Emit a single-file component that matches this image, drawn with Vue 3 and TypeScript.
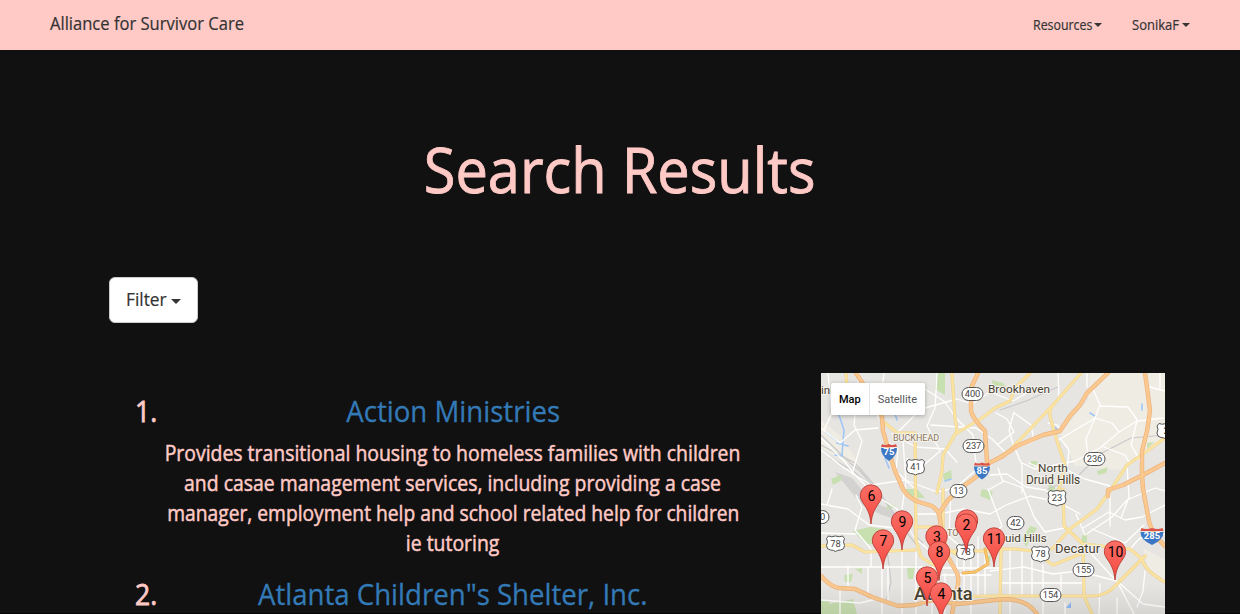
<script setup lang="ts">
interface Result { name: string; width: string; lines: string[] }
interface Pin { label: string; x: number; y: number }
interface Label { text: string; x: number; y: number; size: number; color?: string; weight?: number }
interface Shield { text: string; x: number; y: number; kind: 'oval' | 'us' | 'interstate' }

const menus: string[] = ['Resources', 'SonikaF']

const results: Result[] = [
  {
    name: 'Action Ministries',
    width: 'first',
    lines: [
      'Provides transitional housing to homeless families with children',
      'and casae management services, including providing a case',
      'manager, employment help and school related help for children',
      'ie tutoring',
    ],
  },
  { name: 'Atlanta Children"s Shelter, Inc.', width: 'second', lines: [] },
]

const highways: string[] = [
  'M856 373L865 387L877 405L882 417L883 431L890 455L895 471L903 489Q908 498 919 502L932 506Q940 511 940 520L942 532L948 557L957 573Q960 582 956 592L952 614',
  'M978 373L971 388V411Q973 419 985 431L987 462',
  'M1108 373L1087 393L1080 405L1070 416L1060 431L1043 435L1017 446L1003 456L987 464L976 477L965 485L948 500L940 512',
  'M1145 373L1148 395L1150 411L1147 431L1142 451V475L1143 489L1148 516Q1150 533 1165 546',
  'M1165 463L1143 475L1123 485L1108 490V496',
  'M821 576Q831 587 839 588L855 589L872 597L898 606L915 605L932 600L958 604L995 600Q1025 596 1037 614',
]
const mainRoads: string[] = [
  'M846 373L847 388',
  'M952 373L955 418L957 431L943 455L942 471L937 493',
  'M957 433L982 418L995 408L1010 401L1015 388L1030 373',
  'M885 423L897 433H915L916 540L921 557L935 566',
  'M1081 373L1053 405Q1048 411 1051 420L1057 441L1065 465L1058 493',
  'M1053 405L1010 450L990 463',
  'M1165 438L1140 456L1127 465L1110 491L1097 509L1070 529L1052 549',
  'M1063 489L1064 526L1083 544L1130 549L1142 559Q1145 571 1165 582',
  'M1145 556L1117 584Q1107 596 1092 596H990L945 597',
  'M945 551L995 551L1001 549L1015 549L1033 551L1053 565L1083 553',
  'M1083 544L1084 596L1092 614',
  'M1001 549L1000 614',
  'M821 546L852 545L865 552L915 550',
  'M915 527H943M943 489V540M932 540L960 556',
]
const ramp = 'M963 573L975 572L988 564L985 549'
const streets: string[] = [
  'M821 438L845 462L855 475L875 495L897 509L915 538L930 551',
  'M821 450L844 468L871 485L905 480L937 492L955 488L975 471',
  'M821 428L840 443L855 430L878 428M828 373L832 413L824 430M859 373L854 425L862 441L852 474M884 373L878 418M915 415L898 432',
  'M925 389L945 402L955 417L973 435L976 464M937 373L935 408L927 426L940 451L925 464L907 459',
  'M925 408L957 399L972 404L990 392L1013 401L1030 391M931 425L976 428L992 439L1008 455',
  'M892 434L916 447L945 449L957 462M885 440L898 449L896 471L914 488M903 441L906 481L902 509',
  'M856 495L862 507L855 530L871 549V566M821 504L848 509L869 525L895 528M821 567H857L868 567H916L970 568',
  'M902 515V614M902 566V614M882 543V614M916 552V614M840 591V614M821 600L860 603L880 598',
  'M917 514H939L964 509L990 514L1006 505L1030 496L1058 502L1080 514M951 489L949 537L971 555V614',
  'M937 568L1000 568M942 575H991M957 555V592M964 556V592M978 537V597M985 555V595',
  'M988 489L1002 526L990 538M1023 489L1034 517L1045 532L1064 528M1010 549V596M1022 550V596M1032 551V597',
  'M990 571L1024 567L1053 574L1078 571L1117 581L1143 604L1165 607M1000 583H1082M1010 596V614M1043 565V614M1061 575V596',
  'M1087 549L1107 571L1118 583L1134 614M1083 528L1109 512L1125 520L1142 517L1165 505M1110 526V489',
  'M1092 529L1125 543L1144 525M1076 514L1085 535L1112 517L1127 500L1155 488L1165 491',
  'M1092 387L1100 405L1095 418L1057 441M1100 406L1128 407L1138 421L1163 418M1095 418L1086 439L1088 457',
  'M1095 418L1112 423L1119 432L1100 448L1075 461L1035 469L1022 463M1119 432L1137 421L1131 445L1140 460',
  'M1127 465L1129 497L1121 518M1104 447L1125 455L1130 464M1150 387L1165 391M1160 373V388',
  'M1014 412L1009 430L1013 444L1022 465V493M996 413L1007 419L1014 432L997 445M1014 413L1031 425L1034 441L1019 447',
  'M1058 373L1059 399M1087 373V387M1048 423L1057 425L1061 430M1060 438L1069 450L1067 470L1085 479L1110 486',
  'M990 489L1004 481L1023 488M998 468L1003 482M990 475L1007 474L1026 487L1045 490L1056 497M1029 463L1045 470',
  'M1100 584L1099 614M1145 571L1143 591L1137 607M1130 549L1140 538L1165 534M1117 598V614M1065 603V614',
  'M832 489L827 505M848 566V590M868 567V596M888 566V603M932 567V614M945 574V614M821 533L856 534',
]
const rails: string[] = [
  'M821 435L846 459L861 472L888 505L900 522L923 543',
  'M821 445L855 463L877 488L902 527L916 544',
  'M830 458L852 470L867 483M1000 410L1026 401L1058 387M1048 489L1078 476L1100 454L1131 438L1165 435M887 550L891 582L886 602',
]
const parks: string[] = [
  'M937 373H945V395L935 389Z', 'M831 479L840 475L842 480L833 485Z', 'M943 474L951 470L952 478L944 481Z',
  'M853 531L870 527L885 529L882 545L866 544Z', 'M821 600L831 600L829 604L853 599L857 614H821Z',
  'M844 575L853 574L851 582H845Z', 'M901 489L917 489L925 498H911Z', 'M907 568L915 565L913 579H908Z',
  'M982 489L993 492L990 500L980 496Z', 'M992 380L1003 383L1008 389L993 387Z',
  'M1031 461H1038L1036 466H1031Z', 'M1049 484L1055 487V493H1048Z', 'M1097 471L1108 467L1106 473L1098 475Z',
  'M1030 526L1037 528L1026 547L1022 539Z', 'M1082 536L1087 532V547L1081 545Z', 'M1147 443L1154 442L1147 449Z',
  'M855 569L862 568V574Z', 'M983 558L991 555L990 562Z', 'M887 503L896 506L887 511Z',
]
const water: string[] = [
  'M841 388L838 412L844 430L842 455M837 443L848 446M826 432L837 441',
  'M1090 413L1095 416M1142 404V410M1054 427L1058 430',
  'M885 458L889 468M945 481L951 479M894 411L897 420M835 455L842 456',
]

const labels: Label[] = [
  { text: 'in', x: 821, y: 394, size: 11.5 },
  { text: 'Brookhaven', x: 988, y: 393, size: 11.8 },
  { text: 'BUCKHEAD', x: 893, y: 441, size: 9, color: '#8c7558' },
  { text: 'North', x: 1038, y: 472, size: 11.8 },
  { text: 'Druid Hills', x: 1026, y: 484, size: 11.9 },
  { text: 'uid Hills', x: 1005, y: 542, size: 11.7 },
  { text: 'Decatur', x: 1055, y: 552.5, size: 13 },
  { text: 'TO', x: 947, y: 536, size: 9, color: '#8c7558' },
  { text: 'Atlanta', x: 914, y: 600, size: 18.3, weight: 500 },
]
const shields: Shield[] = [
  { text: '400', x: 972.5, y: 394, kind: 'oval' },
  { text: '237', x: 973.5, y: 446, kind: 'oval' },
  { text: '236', x: 1094.5, y: 459, kind: 'oval' },
  { text: '13', x: 958.5, y: 491, kind: 'oval' },
  { text: '42', x: 1015.5, y: 523, kind: 'oval' },
  { text: '155', x: 1083.5, y: 570, kind: 'oval' },
  { text: '154', x: 1050.5, y: 595, kind: 'oval' },
  { text: '0', x: 822.5, y: 517, kind: 'oval' },
  { text: '41', x: 915.5, y: 467, kind: 'us' },
  { text: '78', x: 835.5, y: 543.5, kind: 'us' },
  { text: '78', x: 965.5, y: 552, kind: 'us' },
  { text: '23', x: 1057, y: 498, kind: 'us' },
  { text: '78', x: 1040.5, y: 554, kind: 'us' },
  { text: '2', x: 1166, y: 431, kind: 'us' },
  { text: '75', x: 889, y: 452, kind: 'interstate' },
  { text: '85', x: 982, y: 470.5, kind: 'interstate' },
  { text: '285', x: 1152, y: 536, kind: 'interstate' },
]
const pins: Pin[] = [
  { label: '6', x: 871, y: 495 },
  { label: '', x: 967, y: 520 },
  { label: '9', x: 902, y: 521 },
  { label: '2', x: 966, y: 524 },
  { label: '3', x: 936.5, y: 536 },
  { label: '11', x: 994, y: 538 },
  { label: '7', x: 883, y: 540 },
  { label: '10', x: 1115, y: 551 },
  { label: '8', x: 939, y: 551.5 },
  { label: '5', x: 927, y: 577 },
  { label: '4', x: 941, y: 593 },
]
const ovalWidth = (s: Shield): number => (s.text.length > 2 ? 21 : s.text.length === 2 ? 17 : 13)
const badgeWidth = (s: Shield): number => (s.text.length > 2 ? 23 : 16)
</script>

<template>
  <div class="page">
    <nav class="navbar">
      <a class="brand">Alliance for Survivor Care</a>
      <div class="menus">
        <a v-for="m in menus" :key="m" class="menu" :class="m.toLowerCase()"><span>{{ m }}</span><i class="caret"></i></a>
      </div>
    </nav>
    <h1 class="title"><span>Search Results</span></h1>
    <button class="filter"><span>Filter</span><i class="caret big"></i></button>
    <div class="content">
      <div class="results">
        <section v-for="(r, i) in results" :key="r.name" class="result">
          <div class="number">{{ i + 1 }}.</div>
          <div class="body">
            <h2><a :class="r.width">{{ r.name }}</a></h2>
            <p v-for="(line, n) in r.lines" :key="line" :class="'line' + n"><span>{{ line }}</span></p>
          </div>
        </section>
      </div>
      <div class="map">
        <svg width="344" height="241" viewBox="821 373 344 241">
          <defs>
            <linearGradient id="pin" x1="0" y1="0" x2="0" y2="1">
              <stop offset="0" stop-color="#fc7067" />
              <stop offset="1" stop-color="#f2473f" />
            </linearGradient>
            <linearGradient id="shade" x1="0" y1="0" x2="0" y2="1">
              <stop offset="0" stop-opacity="0" />
              <stop offset="1" stop-opacity=".07" />
            </linearGradient>
          </defs>
          <rect x="821" y="373" width="344" height="241" fill="#e7e5e2" />
          <path d="M1090 373H1165V440L1120 470L1075 466L1060 433L1088 400ZM821 420L842 437L860 466L845 462L821 448ZM1143 548L1165 560V580L1148 568Z" fill="#efece3" />
          <path d="M835 472L852 478L872 502L888 508L900 521L880 514L862 505Z" fill="#d3d2d1" />
          <path v-for="d in parks" :key="d" :d="d" fill="#c8dfb0" />
          <path d="M1066 608L1071 602V608Z" fill="#8fb9f5" />
          <g fill="none" stroke-linejoin="round" stroke-linecap="round">
            <path v-for="d in rails" :key="d" :d="d" stroke="#c9c9ca" stroke-width="1.2" />
            <path v-for="d in water" :key="d" :d="d" stroke="#a0c6f6" stroke-width="1.6" />
            <path v-for="d in streets" :key="d" :d="d" stroke="#fff" stroke-width="1.3" />
            <path v-for="d in mainRoads" :key="d" :d="d" stroke="#ecd08c" stroke-width="3.2" />
            <path v-for="d in mainRoads" :key="d" :d="d" stroke="#fbe3a1" stroke-width="2.3" />
            <path :d="ramp" stroke="#e8a64b" stroke-width="3" />
            <path :d="ramp" stroke="#fbca6d" stroke-width="1.6" />
            <path v-for="d in highways" :key="d" :d="d" stroke="#ecb27a" stroke-width="4.4" />
            <path v-for="d in highways" :key="d" :d="d" stroke="#fbc990" stroke-width="3" />
          </g>
          <rect x="821" y="584" width="344" height="30" fill="url(#shade)" />
          <text v-for="l in labels" :key="l.text" class="place" :x="l.x" :y="l.y" :font-size="l.size" :font-weight="l.weight ?? 400" :fill="l.color ?? '#48402f'">{{ l.text }}</text>
          <g v-for="(s, i) in shields" :key="i" :transform="`translate(${s.x} ${s.y})`">
            <template v-if="s.kind === 'oval'">
              <rect :x="-ovalWidth(s) / 2" y="-6.5" :width="ovalWidth(s)" height="13" rx="6.5" fill="#fff" stroke="#555" />
            </template>
            <template v-else-if="s.kind === 'us'">
              <path d="M-7-7.5Q-4-6 0-7.5Q4-6 7-7.5L9-5Q7-2 9 2Q9 6 5 6.5Q2 6.5 0 8Q-2 6.5-5 6.5Q-9 6-9 2Q-7-2-9-5Z" fill="#fff" stroke="#555" />
            </template>
            <template v-else>
              <path :d="`M${-badgeWidth(s) / 2} -4H${badgeWidth(s) / 2}Q${badgeWidth(s) / 2} 4 0 9Q${-badgeWidth(s) / 2} 4 ${-badgeWidth(s) / 2} -4Z`" fill="#3b77c4" />
              <path :d="`M${-badgeWidth(s) / 2 + 1} -8Q${-badgeWidth(s) / 4} -6 0 -8Q${badgeWidth(s) / 4} -6 ${badgeWidth(s) / 2 - 1} -8L${badgeWidth(s) / 2} -5H${-badgeWidth(s) / 2}Z`" fill="#d9534a" />
            </template>
            <text class="route" :class="s.kind" y="3.3">{{ s.text }}</text>
          </g>
          <g v-for="(p, i) in pins" :key="'p' + i" :transform="`translate(${p.x} ${p.y})`">
            <path d="M0 29C-.8 18-4.5 13-8.5 7A10.7 10.7 0 1 1 8.5 7C4.5 13 .8 18 0 29Z" fill="url(#pin)" stroke="#b93a32" stroke-width=".9" />
            <text class="pin" x=".5" y="5.8">{{ p.label }}</text>
          </g>
        </svg>
        <div class="map-type"><span class="active">Map</span><span>Satellite</span></div>
      </div>
    </div>
  </div>
</template>

<style>
body { margin: 0; background: #111; overflow: hidden; }
</style>

<style scoped>
.page { box-sizing: border-box; height: 614px; overflow: hidden; background: linear-gradient(#111 613px, #040404 613px); color: #ffcac6; font-family: "Open Sans", "Noto Sans", sans-serif; }
.navbar { box-sizing: border-box; height: 50px; padding: 0 50px; display: flex; align-items: center; justify-content: space-between; background: #ffcac6; color: #333; }
.brand { font-size: 18px; line-height: 46px; height: 50px; white-space: nowrap; transform: scaleX(.92); transform-origin: left; -webkit-text-stroke: .2px; }
.menus { display: flex; gap: 30px; }
.menu { display: flex; align-items: center; justify-content: space-between; width: 69px; font-size: 14px; line-height: 20px; white-space: nowrap; }
.menu.sonikaf { width: 58px; }
.menu span { width: 50px; margin-top: -1px; transform: scaleX(.885); transform-origin: left; -webkit-text-stroke: .2px; }
.menu.sonikaf span { transform: scaleX(.93); }
.caret { display: inline-block; border-top: 4px solid; border-left: 4px solid transparent; border-right: 4px solid transparent; }
.title { margin: 79px 0 0; height: 80px; line-height: 80px; font-size: 63px; font-weight: 400; text-align: center; white-space: nowrap; }
.title span { display: inline-block; transform: scaleX(.917); -webkit-text-stroke: .9px; }
.filter { box-sizing: border-box; display: flex; align-items: center; margin: 68px 0 0 109px; width: 89px; height: 46px; padding: 0 0 0 16px; border: 1px solid #ccc; border-radius: 6px; background: #fff; color: #333; font: inherit; font-size: 18px; }
.filter span { width: 41px; margin-top: -2px; text-align: left; transform: scaleX(.96); transform-origin: left; -webkit-text-stroke: .2px; }
.caret.big { border-top-width: 5px; border-left-width: 5px; border-right-width: 5px; margin-left: 4px; margin-top: 2px; }
.content { display: flex; margin-top: 50px; height: 241px; }
.results { width: 821px; padding-top: 19px; box-sizing: border-box; }
.result { display: flex; margin-bottom: 17px; }
.number { width: 18px; margin-left: 135px; font-size: 28.5px; font-weight: 400; line-height: 39px; transform: scaleX(.93); transform-origin: left; -webkit-text-stroke: .8px; white-space: nowrap; }
.body { width: 600px; text-align: center; white-space: nowrap; }
h2 { margin: 0 0 8px; height: 38px; line-height: 38px; font-size: 30px; font-weight: 400; color: #337ab7; }
h2 a { display: inline-block; transform: scaleX(.92); -webkit-text-stroke: .3px; }
p { display: flex; justify-content: center; margin: 0; height: 30px; line-height: 30px; font-size: 21px; }
p span { transform: scaleX(.924); -webkit-text-stroke: .5px; }
.line2 span { transform: scaleX(.916); }
.map { position: relative; width: 344px; height: 241px; overflow: hidden; font-family: Roboto, sans-serif; }
.map svg { display: block; }
.map-type { position: absolute; left: 10px; top: 10px; display: flex; height: 32px; width: 94px; background: #fff; border-radius: 2px; box-shadow: 0 1px 4px rgba(0, 0, 0, .3); color: #565656; font-size: 11px; line-height: 33px; }
.map-type span { flex: 1 0 auto; text-align: center; }
.map-type .active { color: #000; font-weight: 500; border-right: 1px solid #e5e5e5; }
.place { paint-order: stroke; stroke: #f4f3ef; stroke-width: 2px; stroke-linejoin: round; }
.route { font-size: 9.3px; text-anchor: middle; fill: #444; }
.route.interstate { fill: #fff; font-weight: 700; font-size: 9.5px; }
.pin { font-size: 14px; text-anchor: middle; fill: #000; }
</style>
